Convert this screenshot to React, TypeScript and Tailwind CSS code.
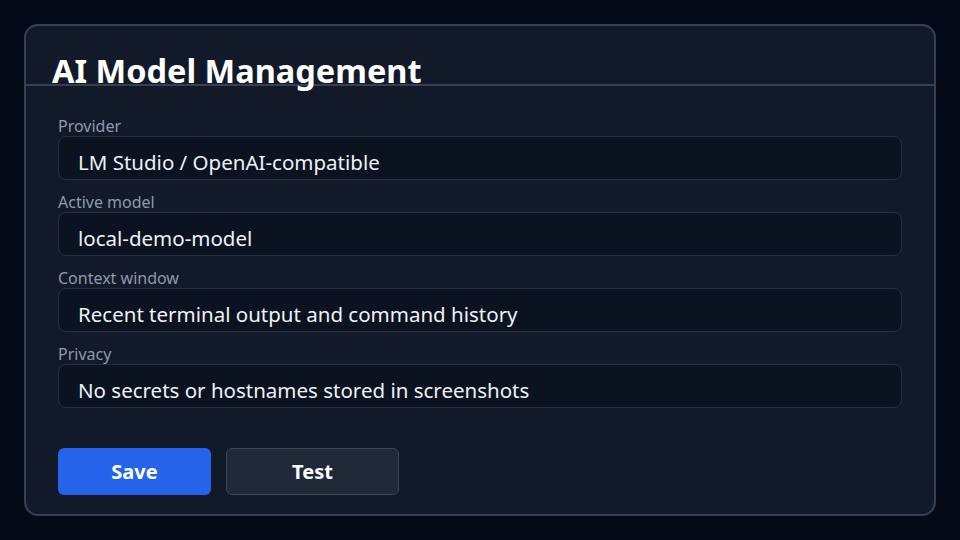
import React from "react";

const fields = [
  { label: "Provider", value: "LM Studio / OpenAI-compatible" },
  { label: "Active model", value: "local-demo-model" },
  { label: "Context window", value: "Recent terminal output and command history" },
  { label: "Privacy", value: "No secrets or hostnames stored in screenshots" },
];

export default function App() {
  return (
    <div
      className="w-[960px] h-[540px] bg-[#050a18] pt-[24px] pl-[24px]"
      style={{ fontFamily: '"Noto Sans", "Open Sans", sans-serif' }}
    >
      <div className="w-[912px] h-[492px] rounded-[14px] border-2 border-[#334155] bg-[#121a29] flex flex-col">
        <div className="h-[60px] border-b-2 border-[#334155] pl-[26px] pt-[26px]">
          <h1 className="text-[32.5px] leading-[38px] font-bold text-white whitespace-nowrap">
            AI Model Management
          </h1>
        </div>
        <div className="px-[32px] pt-[30px] flex flex-col gap-[12px]">
          {fields.map((f) => (
            <div key={f.label} className="flex flex-col">
              <div className="text-[16px] leading-[20px] text-[#8e99ab]">{f.label}</div>
              <div className="h-[44px] rounded-lg border border-[#243044] bg-[#0c1320] pl-[19px] pt-[11px] text-[20.5px] leading-[28px] text-[#eef2f7] whitespace-nowrap">
                {f.value}
              </div>
            </div>
          ))}
        </div>
        <div className="px-[32px] pt-[40px] flex gap-[15px]">
          <button className="w-[153px] h-[47px] rounded-md bg-[#2563eb] text-white text-[20px] font-bold">
            Save
          </button>
          <button className="w-[173px] h-[47px] rounded-md bg-[#1f2937] border border-[#3b4656] text-white text-[20px] font-bold">
            Test
          </button>
        </div>
      </div>
    </div>
  );
}
